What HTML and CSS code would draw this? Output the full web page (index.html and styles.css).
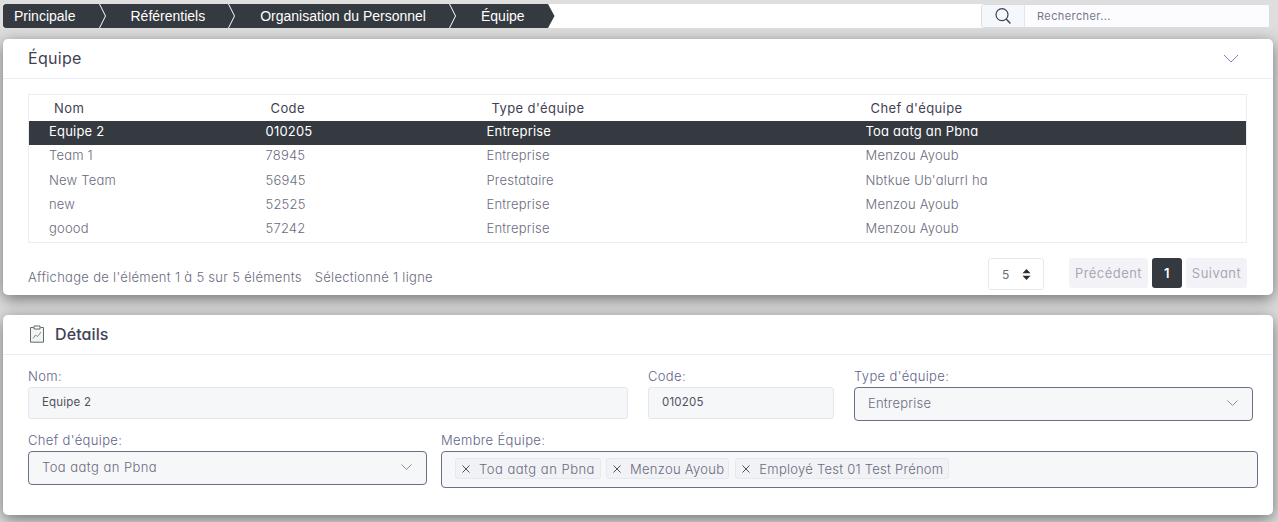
FILE: index.html
```html
<!DOCTYPE html>
<html lang="fr">
<head>
<meta charset="utf-8">
<title>Équipe</title>
<link rel="stylesheet" href="styles.css">
</head>
<body>
<header class="topbar">
  <nav class="crumbs">
    <span class="crumb">Principale</span>
    <svg class="sep" viewBox="0 0 7 24"><path d="M0.5 0 L6.5 12 L0.5 24" fill="none" stroke="#fff"/></svg>
    <span class="crumb">Référentiels</span>
    <svg class="sep" viewBox="0 0 7 24"><path d="M0.5 0 L6.5 12 L0.5 24" fill="none" stroke="#fff"/></svg>
    <span class="crumb">Organisation du Personnel</span>
    <svg class="sep" viewBox="0 0 7 24"><path d="M0.5 0 L6.5 12 L0.5 24" fill="none" stroke="#fff"/></svg>
    <span class="crumb">Équipe</span>
    <svg class="tip" viewBox="0 0 7 24"><path d="M0 0 L6.5 12 L0 24 Z" fill="#343a40"/></svg>
  </nav>
  <div class="search">
    <span class="search-icon">
      <svg width="18" height="18" viewBox="0 0 18 18"><circle cx="8" cy="7.6" r="6" fill="none" stroke="#3f4254" stroke-width="1.2"/><path d="M12.2 12 L16.4 16.4" stroke="#3f4254" stroke-width="1.4" fill="none"/></svg>
    </span>
    <span class="search-input">Rechercher...</span>
  </div>
</header>

<section class="card list-card">
  <div class="card-head">
    <h2 class="card-title">Équipe</h2>
    <svg class="collapse" width="16" height="9" viewBox="0 0 16 9"><path d="M1 1 L8 8 L15 1" fill="none" stroke="#7a82c8" stroke-width="1"/></svg>
  </div>
  <div class="list-body">
    <table class="grid">
      <thead>
        <tr><th class="c1">Nom</th><th class="c2">Code</th><th class="c3">Type d'équipe</th><th>Chef d'équipe</th></tr>
      </thead>
      <tbody>
        <tr class="selected"><td>Equipe 2</td><td>010205</td><td>Entreprise</td><td>Toa aatg an Pbna</td></tr>
        <tr><td>Team 1</td><td>78945</td><td>Entreprise</td><td>Menzou Ayoub</td></tr>
        <tr><td>New Team</td><td>56945</td><td>Prestataire</td><td>Nbtkue Ub'alurrl ha</td></tr>
        <tr><td>new</td><td>52525</td><td>Entreprise</td><td>Menzou Ayoub</td></tr>
        <tr class="last"><td>goood</td><td>57242</td><td>Entreprise</td><td>Menzou Ayoub</td></tr>
      </tbody>
    </table>
    <div class="grid-foot">
      <div class="info"><span>Affichage de l'élément 1 à 5 sur 5 éléments</span><span>Sélectionné 1 ligne</span></div>
      <div class="page-size">
        <span>5</span>
        <svg width="9" height="11" viewBox="0 0 9 11"><path d="M4.5 0 L8.5 4.3 H0.5 Z M4.5 11 L8.5 6.7 H0.5 Z" fill="#2b2f36"/></svg>
      </div>
      <div class="pager">
        <span class="page-btn prev">Précédent</span>
        <span class="page-btn current">1</span>
        <span class="page-btn next">Suivant</span>
      </div>
    </div>
  </div>
</section>

<section class="card detail-card">
  <div class="card-head detail-head">
    <svg class="detail-icon" width="16" height="18" viewBox="0 0 16 18">
      <path d="M4.5 2.5 H1.5 V17.2 H14.5 V2.5 H11.5" fill="#f2f5f2" stroke="#5f6a6e" stroke-width="1"/>
      <path d="M5 1 H11 V4 H5 Z" fill="#fff" stroke="#5f6a6e" stroke-width="1"/>
      <path d="M4 13.5 L6.5 10 L8.5 11.5 L12 7" fill="none" stroke="#7f8f80" stroke-width="1"/>
    </svg>
    <h2 class="card-title strong">Détails</h2>
  </div>
  <div class="form">
    <div class="form-row first">
      <div class="field f-nom"><label>Nom:</label><div class="readonly">Equipe 2</div></div>
      <div class="field f-code"><label>Code:</label><div class="readonly">010205</div></div>
      <div class="field f-type"><label>Type d'équipe:</label>
        <div class="select"><span>Entreprise</span><svg width="11" height="6" viewBox="0 0 11 6"><path d="M0.5 0.5 L5.5 5.5 L10.5 0.5" fill="none" stroke="#8a8ea5"/></svg></div>
      </div>
    </div>
    <div class="form-row second">
      <div class="field f-chef"><label>Chef d'équipe:</label>
        <div class="select wide"><span>Toa aatg an Pbna</span><svg width="11" height="6" viewBox="0 0 11 6"><path d="M0.5 0.5 L5.5 5.5 L10.5 0.5" fill="none" stroke="#8a8ea5"/></svg></div>
      </div>
      <div class="field f-membre"><label>Membre Équipe:</label>
        <div class="tags">
          <span class="tag t-a"><svg width="8" height="8" viewBox="0 0 8 8"><path d="M0.5 0.5 L7.5 7.5 M7.5 0.5 L0.5 7.5" stroke="#4f5162" fill="none"/></svg>Toa aatg an Pbna</span>
          <span class="tag t-b"><svg width="8" height="8" viewBox="0 0 8 8"><path d="M0.5 0.5 L7.5 7.5 M7.5 0.5 L0.5 7.5" stroke="#4f5162" fill="none"/></svg>Menzou Ayoub</span>
          <span class="tag t-c"><svg width="8" height="8" viewBox="0 0 8 8"><path d="M0.5 0.5 L7.5 7.5 M7.5 0.5 L0.5 7.5" stroke="#4f5162" fill="none"/></svg>Employé Test 01 Test Prénom</span>
        </div>
      </div>
    </div>
  </div>
</section>
</body>
</html>
```

FILE: styles.css
```css
* { box-sizing: border-box; }
html, body { margin: 0; height: 522px; overflow: hidden; }
body {
  background: #dedede;
  padding: 4px 5px 0 3px;
  font-family: Inter, "Open Sans", sans-serif;
  font-feature-settings: "cv11" 1;
  font-weight: 300;
  font-size: 13px;
  letter-spacing: .3px;
  color: #6a6b7e;
}
.topbar {
  display: flex;
  justify-content: space-between;
  height: 24px;
  width: 1267px;
  background: #fff;
  border-radius: 3px;
}
.crumbs {
  display: flex;
  align-items: center;
  height: 24px;
  background: #fff;
}
.crumb {
  display: flex;
  align-items: center;
  height: 24px;
  padding: 0 24px;
  background: #343a40;
  color: #fff;
  font-family: "Liberation Sans", Arial, sans-serif;
  font-weight: 400;
  font-size: 14px;
  letter-spacing: 0;
}
.crumb:first-child { padding-left: 11px; border-radius: 3px 0 0 3px; }
.crumb:nth-of-type(2) { padding-right: 23px; }
.crumb:nth-of-type(3) { padding: 0 23px 0 25px; }
.crumb:nth-of-type(4) { padding: 0 23px 0 25px; }
.sep { width: 7px; height: 24px; background: #343a40; display: block; }
.tip { width: 7px; height: 24px; display: block; }
.search {
  display: flex;
  width: 289px;
  height: 24px;
  border: 1px solid #d8dae4;
  border-radius: 3px;
  background: #fcfcfe;
}
.search-icon {
  display: flex;
  align-items: center;
  justify-content: center;
  width: 43px;
  background: #f5f8fa;
  border-right: 1px solid #e4e6ef;
}
.search-input {
  padding-left: 12px;
  font-size: 11px;
  line-height: 22px;
  font-weight: 400;
  letter-spacing: .4px;
  color: #74788d;
}
.card {
  width: 1270px;
  background: #fff;
  border-radius: 5px;
  box-shadow: 0 4px 16px rgba(0, 0, 0, .5);
}
.list-card { height: 256px; margin-top: 11px; }
.detail-card { height: 200px; margin-top: 20px; }
.card-head {
  display: flex;
  align-items: center;
  justify-content: space-between;
  height: 40px;
  padding: 0 34px 1px 25px;
  border-bottom: 1px solid #ebedf3;
}
.detail-head { padding-bottom: 2px; }
.card-title {
  margin: 0;
  font-size: 16px;
  font-weight: 400;
  color: #3f4254;
}
.card-title.strong { font-weight: 500; flex: 1; letter-spacing: .1px; }
.detail-icon { margin-right: 10px; margin-left: 1px; }
.list-body { padding: 15px 26px 0 25px; }
.grid {
  width: 1219px;
  border-collapse: collapse;
  table-layout: fixed;
  border: 1px solid #ebedf3;
}
.grid th {
  height: 26px;
  padding: 0 0 0 25px;
  text-align: left;
  font-weight: 400;
  font-size: 13px;
  letter-spacing: .4px;
  color: #3f4254;
}
.c1 { width: 217px; }
.c2 { width: 221px; }
.c3 { width: 379px; }
.grid td {
  height: 24.25px;
  padding: 0 0 3px 20px;
  font-size: 13px;
  letter-spacing: .2px;
  white-space: nowrap;
}
.grid .last td { height: 25px; padding-bottom: 4px; }
.selected td { background: #343a40; color: #fff; font-weight: 400; }
.grid-foot {
  display: flex;
  align-items: flex-start;
  margin-top: 15px;
  height: 32px;
}
.info { flex: 1; display: flex; gap: 13px; padding-top: 11px; }
.page-size {
  display: flex;
  align-items: center;
  justify-content: space-between;
  width: 56px;
  height: 32px;
  margin-right: 25px;
  padding: 0 12px 0 13px;
  border: 1px solid #e6e8f0;
  border-radius: 3px;
  font-weight: 400;
  font-size: 12px;
}
.pager { display: flex; gap: 4px; }
.page-btn {
  display: flex;
  align-items: center;
  justify-content: center;
  height: 30px;
  background: #f3f3f7;
  border-radius: 3px;
  color: #a8a8b6;
  font-weight: 400;
  letter-spacing: .45px;
}
.prev { width: 79px; }
.next { width: 61px; }
.page-btn.current {
  width: 30px;
  background: #343a40;
  color: #fff;
  font-weight: 600;
}
.form { padding: 13px 0 0 25px; }
.form-row { display: flex; }
.form-row.second { margin-top: 11px; }
label {
  display: block;
  height: 19px;
  line-height: 16px;
  color: #5f6488;
  font-size: 13px;
  letter-spacing: .35px;
}
.f-nom { width: 600px; margin-right: 20px; }
.f-code { width: 186px; margin-right: 20px; }
.f-type { width: 399px; }
.f-chef { width: 399px; margin-right: 14px; }
.f-membre { width: 817px; }
.readonly {
  height: 32px;
  padding: 0 13px;
  background: #f6f7f9;
  border: 1px solid #e4e6ef;
  border-radius: 3px;
  font-size: 11.5px;
  font-weight: 400;
  letter-spacing: .2px;
  line-height: 28px;
  color: #50525f;
}
.select {
  display: flex;
  align-items: center;
  justify-content: space-between;
  height: 34px;
  padding: 0 14px 2px 13px;
  background: #f6f7f9;
  border: 1px solid #6c6f88;
  border-radius: 4px;
  letter-spacing: .2px;
}
.select.wide { letter-spacing: .45px; }
.tags {
  display: flex;
  align-items: flex-start;
  gap: 5px;
  height: 37px;
  padding: 6px 13px 0;
  background: #f6f7f9;
  border: 1px solid #6c6f88;
  border-radius: 4px;
}
.tag {
  display: flex;
  align-items: center;
  gap: 9px;
  height: 21px;
  padding: 0 5px 0 6px;
  background: #f1f2f5;
  border: 1px solid #e6e8ee;
  border-radius: 3px;
}
.t-a { letter-spacing: .5px; }
.t-b { letter-spacing: .3px; padding-right: 4px; }
.t-c { letter-spacing: .25px; margin-left: 1px; }
```
